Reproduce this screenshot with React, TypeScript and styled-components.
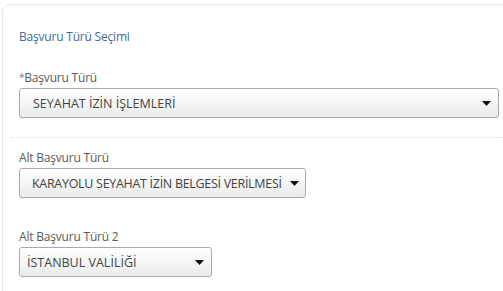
import React from 'react';
import styled, { createGlobalStyle } from 'styled-components';

const GlobalStyle = createGlobalStyle`
  html, body {
    margin: 0;
    padding: 0;
    background: #ffffff;
    overflow: hidden;
  }
  body {
    font-family: 'Open Sans', 'Noto Sans', sans-serif;
  }
`;

const Page = styled.div`
  width: 503px;
  height: 291px;
  overflow: hidden;
  padding: 4px 0 0 2px;
  box-sizing: border-box;
`;

const Card = styled.div`
  width: 520px;
  min-height: 320px;
  box-sizing: border-box;
  border: 1px solid #e4e4e4;
  border-radius: 8px;
  padding: 23px 16px 0 16px;
  display: flex;
  flex-direction: column;
`;

const CardTitle = styled.div`
  font-size: 12px;
  line-height: 18px;
  color: #41699a;
  letter-spacing: -0.2px;
  margin-bottom: 22px;
`;

const Field = styled.div<{ $gapAfter?: number }>`
  display: flex;
  flex-direction: column;
  align-items: flex-start;
  margin-bottom: ${(p) => p.$gapAfter ?? 0}px;
`;

const FieldLabel = styled.label`
  font-size: 12px;
  line-height: 18px;
  color: #5a5a5a;
  letter-spacing: -0.2px;
  margin-bottom: 1px;
`;

const Required = styled.span`
  color: #777777;
  font-size: 10px;
  vertical-align: 1px;
`;

const SelectBox = styled.div<{ $width: number; $padLeft?: number }>`
  width: ${(p) => p.$width}px;
  height: 30px;
  box-sizing: border-box;
  border: 1px solid #aaaaaa;
  border-radius: 3px;
  background: linear-gradient(to bottom, #ffffff 0%, #f4f5f5 50%, #e9ebeb 100%);
  box-shadow: 0 1px 0 rgba(0, 0, 0, 0.04);
  display: flex;
  align-items: center;
  justify-content: space-between;
  gap: 8px;
  padding: 0 7px 0 ${(p) => p.$padLeft ?? 13}px;
`;

const SelectValue = styled.span<{ $spacing?: number }>`
  font-size: 12.5px;
  color: #444444;
  letter-spacing: ${(p) => p.$spacing ?? -0.25}px;
  white-space: nowrap;
`;

const Arrow = styled.svg`
  flex: none;
  width: 9px;
  height: 5px;
`;

const Divider = styled.div`
  height: 0;
  border-top: 1px dotted #dcdcdc;
  margin: 0 -16px 11px -8px;
`;

function SelectArrow() {
  return (
    <Arrow viewBox="0 0 9 5">
      <path d="M0 0 H9 L4.5 5 Z" fill="#111111" />
    </Arrow>
  );
}

interface IDropdownProps {
  label: string;
  value: string;
  width: number;
  padLeft?: number;
  spacing?: number;
  required?: boolean;
  gapAfter?: number;
}

function Dropdown({ label, value, width, padLeft, spacing, required, gapAfter }: IDropdownProps) {
  return (
    <Field $gapAfter={gapAfter}>
      <FieldLabel>
        {required && <Required>*</Required>}
        {label}
      </FieldLabel>
      <SelectBox $width={width} $padLeft={padLeft}>
        <SelectValue $spacing={spacing}>{value}</SelectValue>
        <SelectArrow />
      </SelectBox>
    </Field>
  );
}

export default function App() {
  return (
    <Page>
      <GlobalStyle />
      <Card>
        <CardTitle>Başvuru Türü Seçimi</CardTitle>
        <Dropdown
          required
          label="Başvuru Türü"
          value="SEYAHAT İZİN İŞLEMLERİ"
          width={480}
          spacing={0}
          gapAfter={19}
        />
        <Divider />
        <Dropdown
          label="Alt Başvuru Türü"
          value="KARAYOLU SEYAHAT İZİN BELGESİ VERİLMESİ"
          width={287}
          padLeft={12}
          spacing={-0.3}
          gapAfter={30}
        />
        <Dropdown
          label="Alt Başvuru Türü 2"
          value="İSTANBUL VALİLİĞİ"
          width={193}
          padLeft={7}
          spacing={0}
        />
      </Card>
    </Page>
  );
}
